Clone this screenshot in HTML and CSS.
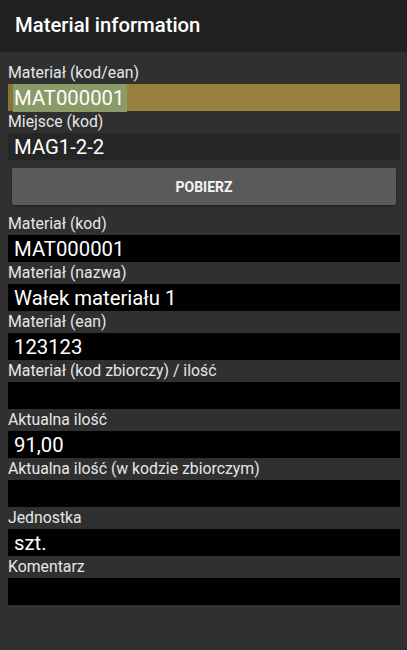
FILE: index.html
```html
<!DOCTYPE html>
<html lang="pl">
<head>
    <meta charset="UTF-8">
    <meta name="viewport" content="width=device-width, initial-scale=1.0">
    <title>Material information</title>
    <link rel="stylesheet" href="styles.css">
</head>
<body>
    <div class="toolbar">Material information</div>
    <div class="content">
        <div class="field">
            <div class="label">Materiał (kod/ean)</div>
            <div class="input focused"><span class="selected">MAT000001</span></div>
        </div>
        <div class="field">
            <div class="label">Miejsce (kod)</div>
            <div class="input editable">MAG1-2-2</div>
        </div>
        <button class="fetch">POBIERZ</button>
        <div class="field">
            <div class="label">Materiał (kod)</div>
            <div class="input">MAT000001</div>
        </div>
        <div class="field">
            <div class="label">Materiał (nazwa)</div>
            <div class="input">Wałek materiału 1</div>
        </div>
        <div class="field">
            <div class="label">Materiał (ean)</div>
            <div class="input">123123</div>
        </div>
        <div class="field">
            <div class="label">Materiał (kod zbiorczy) / ilość</div>
            <div class="input"></div>
        </div>
        <div class="field">
            <div class="label">Aktualna ilość</div>
            <div class="input">91,00</div>
        </div>
        <div class="field">
            <div class="label">Aktualna ilość (w kodzie zbiorczym)</div>
            <div class="input"></div>
        </div>
        <div class="field">
            <div class="label">Jednostka</div>
            <div class="input">szt.</div>
        </div>
        <div class="field">
            <div class="label">Komentarz</div>
            <div class="input"></div>
        </div>
    </div>
</body>
</html>
```

FILE: styles.css
```css
html, body {
    margin: 0;
    height: 100%;
}
body {
    background: #303030;
    font-family: Roboto, 'Noto Sans', sans-serif;
    color: #f2f2f2;
}
.toolbar {
    height: 52px;
    line-height: 50px;
    background: #212121;
    padding-left: 15px;
    font-size: 20.3px;
    font-weight: 500;
    color: #ffffff;
}
.content {
    padding: 10px 7px 0 8px;
}
.field {
    display: flex;
    flex-direction: column;
}
.label {
    font-size: 15.8px;
    line-height: 22px;
    height: 22px;
    color: #e6e6e6;
}
.input {
    height: 27px;
    line-height: 28px;
    background: #000000;
    padding-left: 6px;
    font-size: 20.3px;
    color: #ffffff;
    white-space: nowrap;
}
.input.editable {
    background: #262626;
}
.input.focused {
    background: #9a803e;
    border-left: 5px solid #8c7438;
    padding-left: 0;
}
.selected {
    display: inline-block;
    background: #8b9a69;
    padding-left: 1px;
    padding-right: 3px;
}
.fetch {
    display: block;
    width: 384px;
    height: 37px;
    margin: 8px 0 8px 4px;
    border: none;
    border-radius: 2px;
    background: #5a5a5a;
    color: #f4f4f4;
    font-family: Roboto, 'Noto Sans', sans-serif;
    font-size: 14px;
    font-weight: 700;
    box-shadow: 0 1px 2px rgba(0, 0, 0, 0.4);
}
```
